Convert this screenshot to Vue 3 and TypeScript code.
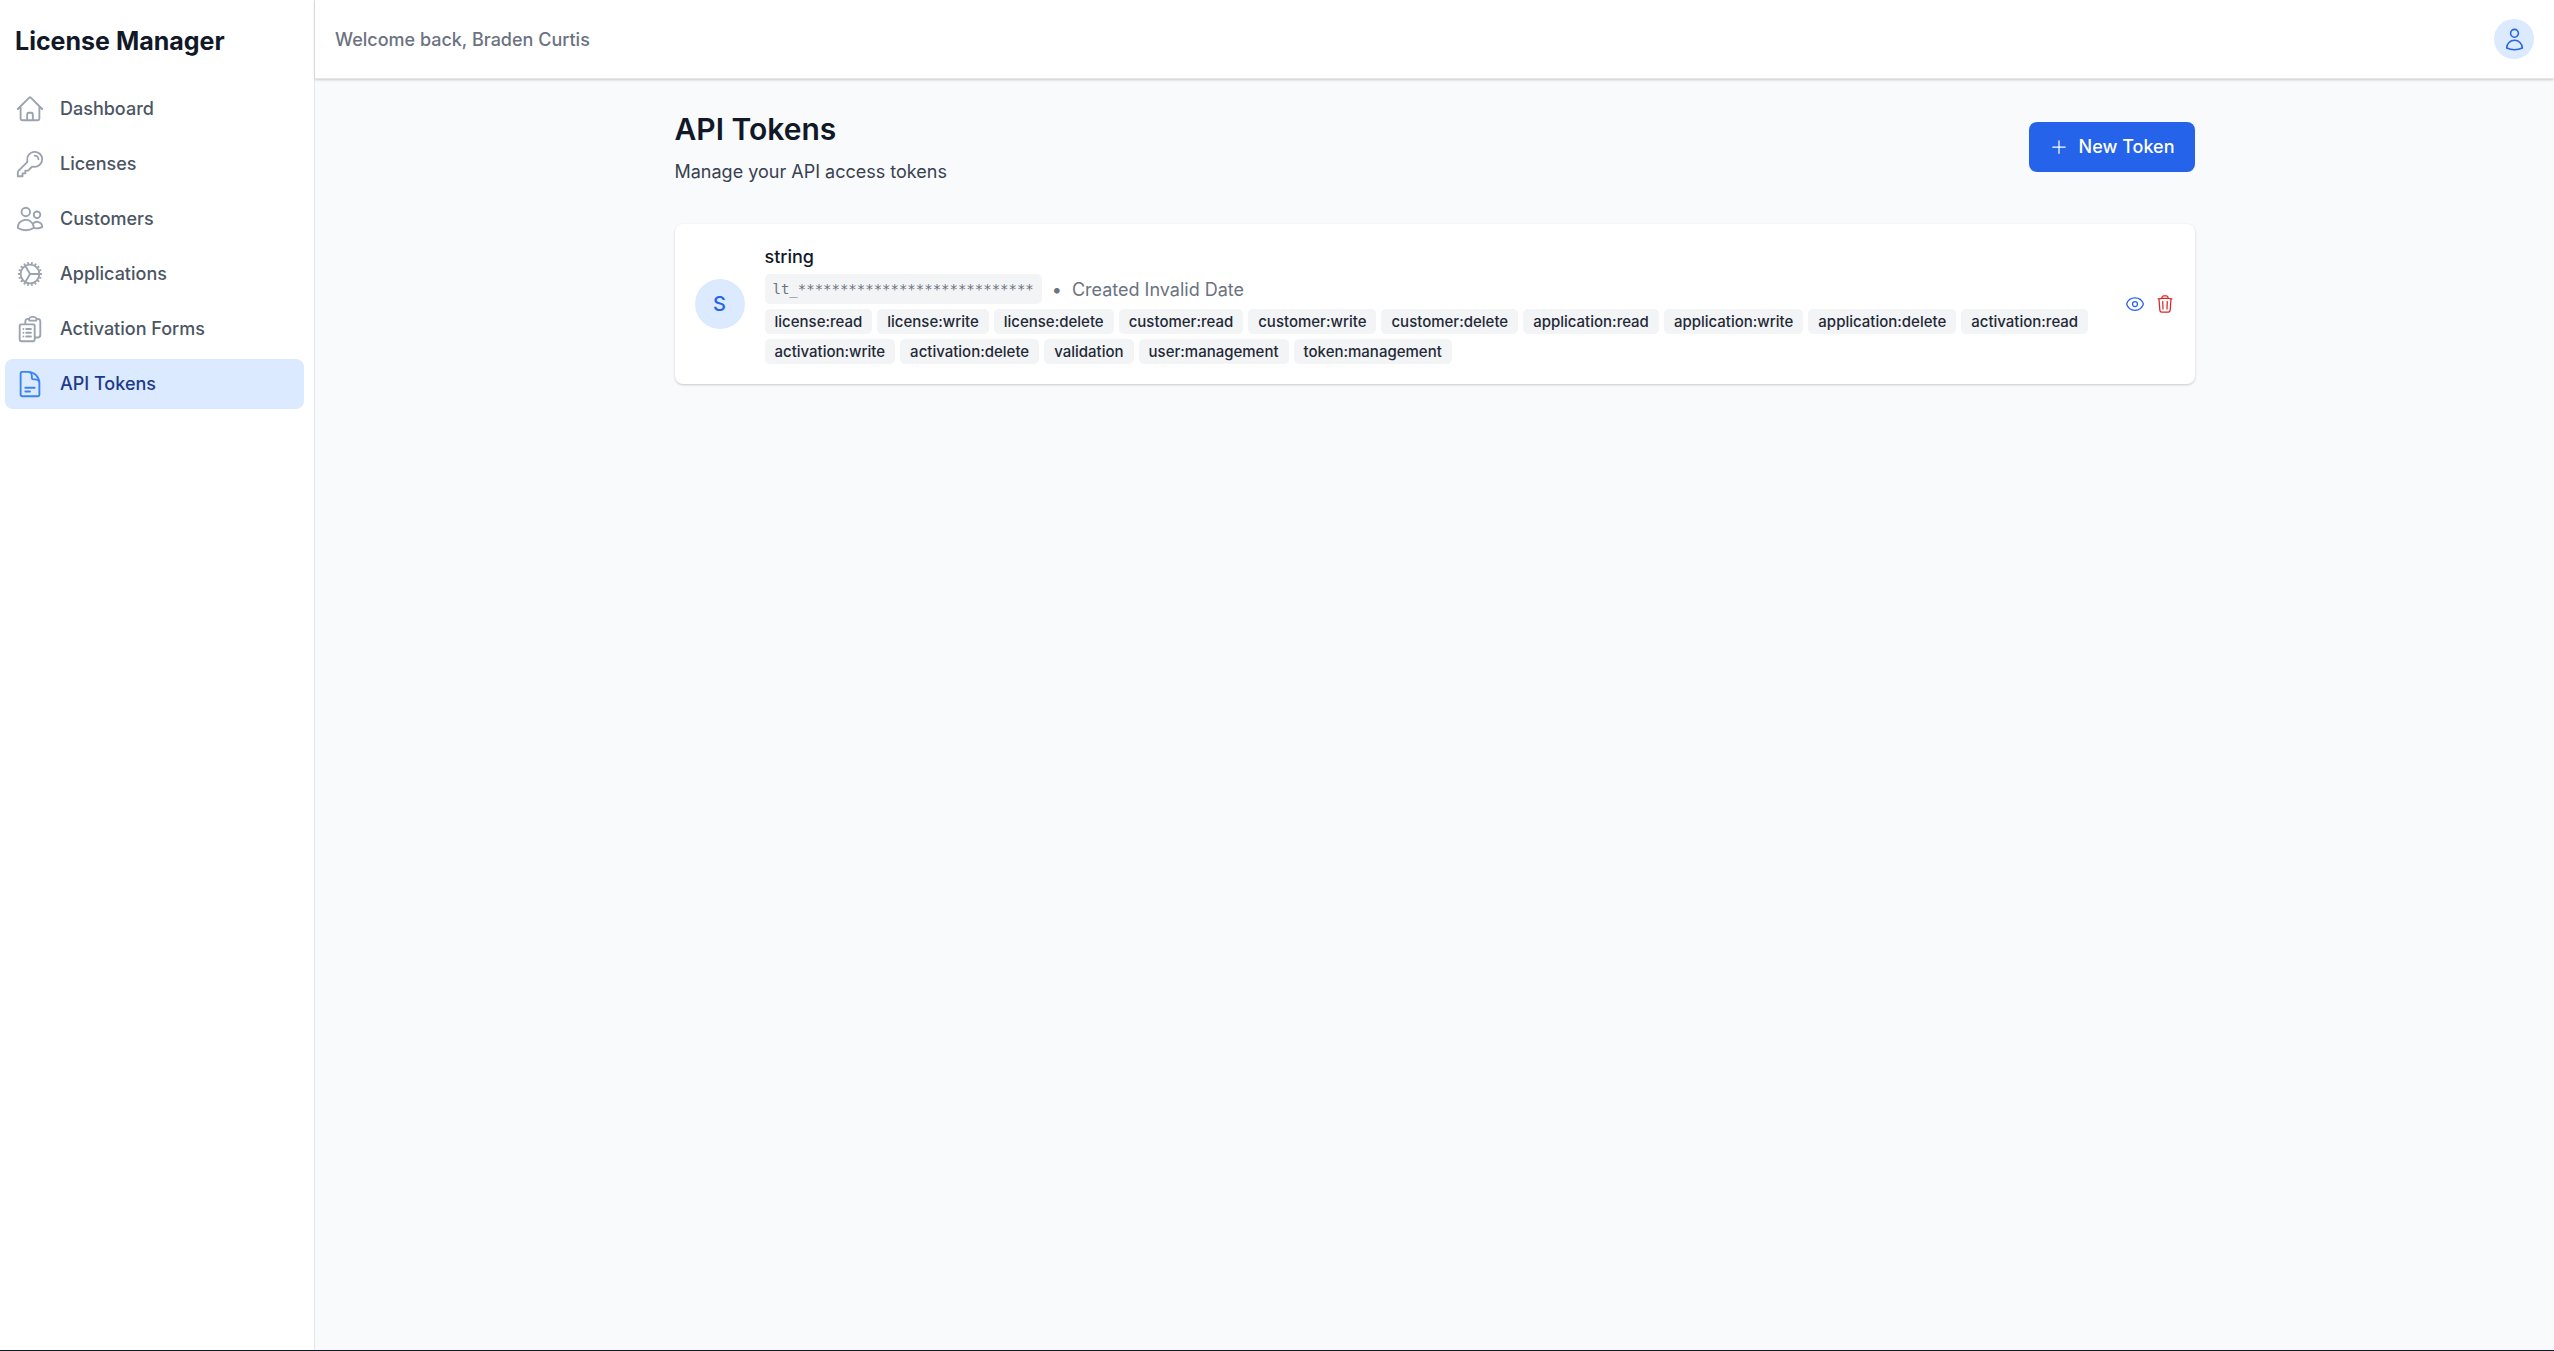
<script setup lang="ts">
interface NavItem {
  label: string
  icon: string[]
  active?: boolean
}

interface ApiToken {
  name: string
  masked: string
  created: string
  permissions: string[]
}

const userName = 'Braden Curtis'

const navItems: NavItem[] = [
  {
    label: 'Dashboard',
    icon: [
      'M2.25 12l8.954-8.955c.44-.439 1.152-.439 1.591 0L21.75 12M4.5 9.75v10.125c0 .621.504 1.125 1.125 1.125H9.75v-4.875c0-.621.504-1.125 1.125-1.125h2.25c.621 0 1.125.504 1.125 1.125V21h4.125c.621 0 1.125-.504 1.125-1.125V9.75M8.25 21h8.25',
    ],
  },
  {
    label: 'Licenses',
    icon: [
      'M15.75 5.25a3 3 0 013 3m3 0a6 6 0 01-7.029 5.912c-.563-.097-1.159.026-1.563.43L10.5 17.25H8.25v2.25H6v2.25H2.25v-2.818c0-.597.237-1.17.659-1.591l6.499-6.499c.404-.404.527-1 .43-1.563A6 6 0 1121.75 8.25z',
    ],
  },
  {
    label: 'Customers',
    icon: [
      'M15 19.128a9.38 9.38 0 002.625.372 9.337 9.337 0 004.121-.952 4.125 4.125 0 00-7.533-2.493M15 19.128v-.003c0-1.113-.285-2.16-.786-3.07M15 19.128v.106A12.318 12.318 0 018.624 21c-2.331 0-4.512-.645-6.374-1.766l-.001-.109a6.375 6.375 0 0111.964-3.07M12 6.375a3.375 3.375 0 11-6.75 0 3.375 3.375 0 016.75 0zm8.25 2.25a2.625 2.625 0 11-5.25 0 2.625 2.625 0 015.25 0z',
    ],
  },
  {
    label: 'Applications',
    icon: [
      'M4.5 12a7.5 7.5 0 0015 0m-15 0a7.5 7.5 0 1115 0m-15 0H3m16.5 0H21m-1.5 0H12m-8.457 3.077l1.41-.513m14.095-5.13l1.41-.513M5.106 17.785l1.15-.964m11.49-9.642l1.149-.964M7.501 19.795l.75-1.3m7.5-12.99l.75-1.3m-6.063 16.658l.26-1.477m2.605-14.772l.26-1.477m0 17.726l-.26-1.477M10.698 4.614l-.26-1.477M16.5 19.794l-.75-1.299M7.5 4.205L12 12m6.894 5.785l-1.149-.964M6.256 7.178l-1.15-.964m15.352 8.864l-1.41-.513M4.954 9.435l-1.41-.514M12.002 12l-3.75 6.495',
    ],
  },
  {
    label: 'Activation Forms',
    icon: [
      'M9 12h3.75M9 15h3.75M9 18h3.75m3 .75H18a2.25 2.25 0 002.25-2.25V6.108c0-1.135-.845-2.098-1.976-2.192a48.424 48.424 0 00-1.123-.08m-5.801 0c-.065.21-.1.433-.1.664 0 .414.336.75.75.75h4.5a.75.75 0 00.75-.75 2.25 2.25 0 00-.1-.664m-5.8 0A2.251 2.251 0 0113.5 2.25H15c1.012 0 1.867.668 2.15 1.586m-5.8 0c-.376.023-.75.05-1.124.08C9.095 4.01 8.25 4.973 8.25 6.108V8.25m0 0H4.875c-.621 0-1.125.504-1.125 1.125v11.25c0 .621.504 1.125 1.125 1.125h9.75c.621 0 1.125-.504 1.125-1.125V9.375c0-.621-.504-1.125-1.125-1.125H8.25zM6.75 12h.008v.008H6.75V12zm0 3h.008v.008H6.75V15zm0 3h.008v.008H6.75V18z',
    ],
  },
  {
    label: 'API Tokens',
    active: true,
    icon: [
      'M19.5 14.25v-2.625a3.375 3.375 0 00-3.375-3.375h-1.5A1.125 1.125 0 0113.5 7.125v-1.5a3.375 3.375 0 00-3.375-3.375H8.25m0 12.75h7.5m-7.5 3H12M10.5 2.25H5.625c-.621 0-1.125.504-1.125 1.125v17.25c0 .621.504 1.125 1.125 1.125h12.75c.621 0 1.125-.504 1.125-1.125V11.25a9 9 0 00-9-9z',
    ],
  },
]

const tokens: ApiToken[] = [
  {
    name: 'string',
    masked: 'lt_' + '*'.repeat(28),
    created: 'Invalid Date',
    permissions: [
      'license:read',
      'license:write',
      'license:delete',
      'customer:read',
      'customer:write',
      'customer:delete',
      'application:read',
      'application:write',
      'application:delete',
      'activation:read',
      'activation:write',
      'activation:delete',
      'validation',
      'user:management',
      'token:management',
    ],
  },
]
</script>

<template>
  <div class="app">
    <aside class="sidebar">
      <div class="brand">License Manager</div>
      <nav class="nav" aria-label="Main">
        <a
          v-for="item in navItems"
          :key="item.label"
          href="#"
          class="nav-link"
          :class="{ active: item.active }"
          :aria-current="item.active ? 'page' : undefined"
        >
          <svg class="icon nav-icon" viewBox="0 0 24 24" aria-hidden="true">
            <path v-for="d in item.icon" :key="d" :d="d" />
          </svg>
          {{ item.label }}
        </a>
      </nav>
    </aside>

    <div class="page">
      <header class="topbar">
        <span class="welcome">Welcome back, {{ userName }}</span>
        <button type="button" class="user-button" aria-label="Account">
          <svg class="icon user-icon" viewBox="0 0 24 24" aria-hidden="true">
            <path
              d="M15.75 6a3.75 3.75 0 11-7.5 0 3.75 3.75 0 017.5 0zM4.501 20.118a7.5 7.5 0 0114.998 0A17.933 17.933 0 0112 21.75c-2.676 0-5.216-.584-7.499-1.632z"
            />
          </svg>
        </button>
      </header>

      <main class="content">
        <div class="heading">
          <div class="heading-text">
            <h1>API Tokens</h1>
            <p>Manage your API access tokens</p>
          </div>
          <button type="button" class="primary">
            <svg class="icon small-icon" viewBox="0 0 24 24" aria-hidden="true">
              <path d="M12 4.5v15m7.5-7.5h-15" />
            </svg>
            New Token
          </button>
        </div>

        <ul class="token-list">
          <li v-for="token in tokens" :key="token.name" class="token">
            <span class="avatar">{{ token.name.charAt(0).toUpperCase() }}</span>
            <div class="token-body">
              <h2>{{ token.name }}</h2>
              <div class="meta">
                <code>{{ token.masked }}</code>
                <span>•</span>
                <span>Created {{ token.created }}</span>
              </div>
              <div class="tags">
                <span v-for="p in token.permissions" :key="p" class="tag">{{ p }}</span>
              </div>
            </div>
            <div class="actions">
              <button type="button" class="icon-button view" aria-label="View token">
                <svg class="icon small-icon" viewBox="0 0 24 24" aria-hidden="true">
                  <path
                    d="M2.036 12.322a1.012 1.012 0 010-.639C3.423 7.51 7.36 4.5 12 4.5c4.638 0 8.573 3.007 9.963 7.178.07.207.07.431 0 .639C20.577 16.49 16.64 19.5 12 19.5c-4.638 0-8.573-3.007-9.963-7.178z"
                  />
                  <path d="M15 12a3 3 0 11-6 0 3 3 0 016 0z" />
                </svg>
              </button>
              <button type="button" class="icon-button delete" aria-label="Delete token">
                <svg class="icon small-icon" viewBox="0 0 24 24" aria-hidden="true">
                  <path
                    d="M14.74 9l-.346 9m-4.788 0L9.26 9m9.968-3.21c.342.052.682.107 1.022.166m-1.022-.165L18.16 19.673a2.25 2.25 0 01-2.244 2.077H8.084a2.25 2.25 0 01-2.244-2.077L4.772 5.79m14.456 0a48.108 48.108 0 00-3.478-.397m-12 .562c.34-.059.68-.114 1.022-.165m0 0a48.11 48.11 0 013.478-.397m7.5 0v-.916c0-1.18-.91-2.164-2.09-2.201a51.964 51.964 0 00-3.32 0c-1.18.037-2.09 1.022-2.09 2.201v.916m7.5 0a48.667 48.667 0 00-7.5 0"
                  />
                </svg>
              </button>
            </div>
          </li>
        </ul>
      </main>
    </div>
  </div>
</template>

<style>
body {
  margin: 0;
  background: #f9fafb;
}
</style>

<style scoped>
.app {
  box-sizing: border-box;
  display: flex;
  min-height: 100vh;
  border-bottom: 1px solid #111827;
  background: #f9fafb;
  color: #111827;
  font-family: Inter, 'Liberation Sans', sans-serif;
  font-size: 18px;
  line-height: 25px;
}

.icon {
  flex: none;
  fill: none;
  stroke: currentColor;
  stroke-width: 1.5;
  stroke-linecap: round;
  stroke-linejoin: round;
}

button {
  font: inherit;
  border: 0;
  padding: 0;
  cursor: pointer;
}

h1,
h2,
p,
ul {
  margin: 0;
  padding: 0;
}

.sidebar {
  box-sizing: border-box;
  flex: none;
  width: 315px;
  border-right: 1px solid #e5e7eb;
  background: #fff;
}

.brand {
  padding: 24px 15px 25px;
  font-size: 25px;
  font-weight: 700;
  line-height: 35px;
}

.nav {
  display: flex;
  flex-direction: column;
  gap: 5px;
  padding: 0 10px 0 5px;
}

.nav-link {
  display: flex;
  align-items: center;
  gap: 15px;
  padding: 10px;
  border-radius: 8px;
  color: #4b5563;
  font-weight: 500;
  line-height: 30px;
  text-decoration: none;
}

.nav-icon {
  width: 30px;
  height: 30px;
  color: #9ca3af;
}

.nav-link.active {
  background: #dbeafe;
  color: #1e3a8a;
}

.active .nav-icon {
  color: #3b82f6;
}

.page {
  flex: 1;
  min-width: 0;
}

.topbar {
  display: flex;
  align-items: center;
  justify-content: space-between;
  height: 78px;
  padding: 0 20px;
  border-bottom: 1px solid #e5e7eb;
  background: #fff;
  box-shadow: 0 1px 3px rgba(0, 0, 0, 0.1), 0 1px 2px rgba(0, 0, 0, 0.1);
}

.welcome {
  color: #6b7280;
  font-weight: 500;
}

.user-button {
  display: flex;
  align-items: center;
  justify-content: center;
  width: 40px;
  height: 40px;
  border-radius: 50%;
  background: #dbeafe;
  color: #2563eb;
}

.user-icon {
  width: 25px;
  height: 25px;
}

.content {
  box-sizing: border-box;
  max-width: 1600px;
  margin: 0 auto;
  padding: 30px 40px;
}

.heading {
  display: flex;
  align-items: center;
  justify-content: space-between;
  margin-bottom: 40px;
}

.heading-text {
  display: flex;
  flex-direction: column;
  gap: 10px;
}

h1 {
  font-size: 30px;
  font-weight: 600;
  line-height: 40px;
}

.heading-text p {
  color: #374151;
}

.primary {
  display: flex;
  align-items: center;
  gap: 10px;
  height: 50px;
  padding: 0 20px;
  border-radius: 8px;
  background: #2563eb;
  color: #fff;
  font-weight: 500;
}

.small-icon {
  width: 20px;
  height: 20px;
}

.token-list {
  list-style: none;
}

.token {
  display: flex;
  align-items: center;
  gap: 20px;
  padding: 20px;
  border-radius: 8px;
  background: #fff;
  box-shadow: 0 1px 3px rgba(0, 0, 0, 0.1), 0 1px 2px rgba(0, 0, 0, 0.1);
}

.avatar {
  flex: none;
  width: 50px;
  border-radius: 50%;
  background: #dbeafe;
  color: #2563eb;
  font-size: 20px;
  font-weight: 500;
  line-height: 50px;
  text-align: center;
}

.token-body {
  display: flex;
  flex: 1;
  flex-direction: column;
  gap: 5px;
  min-width: 0;
}

h2 {
  font-size: 18px;
  font-weight: 500;
}

.meta {
  display: flex;
  align-items: center;
  gap: 10px;
  color: #6b7280;
}

code {
  padding: 0 8px;
  border-radius: 5px;
  background: #f3f4f6;
  font-family: 'DejaVu Sans Mono', monospace;
  font-size: 14px;
  line-height: 30px;
}

.tags {
  display: flex;
  flex-wrap: wrap;
  gap: 5px;
}

.tag {
  padding: 0 10px;
  border-radius: 5px;
  background: #f3f4f6;
  color: #1f2937;
  font-size: 15px;
  font-weight: 500;
}

.actions {
  display: flex;
  flex: none;
  gap: 10px;
}

.icon-button {
  display: flex;
  background: none;
}

.view {
  color: #2563eb;
}

.delete {
  color: #dc2626;
}
</style>
